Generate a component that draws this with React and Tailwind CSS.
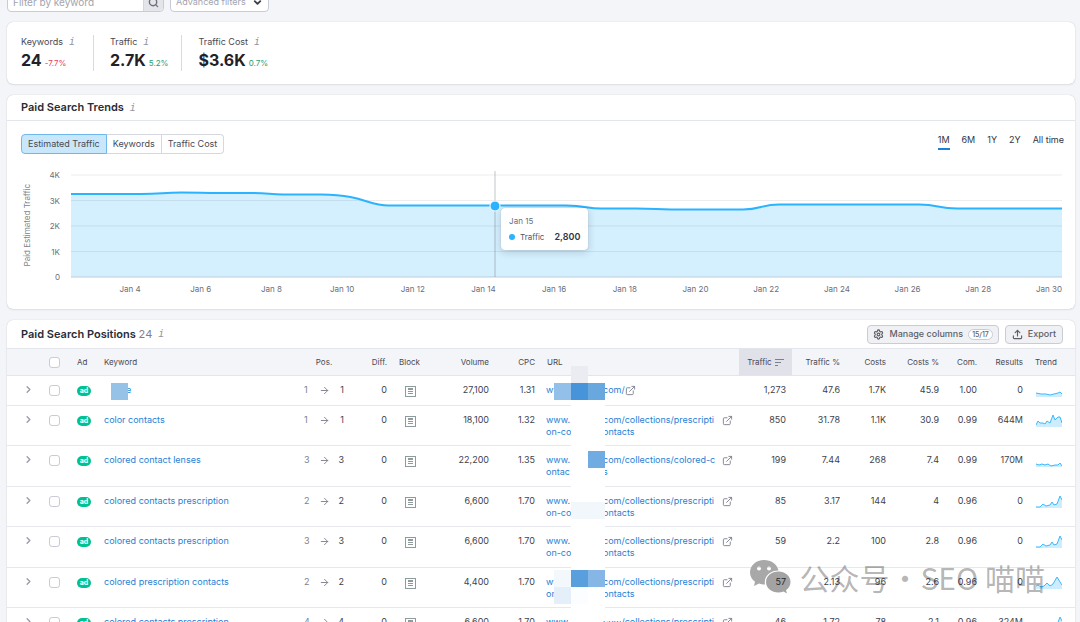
import React from 'react';
import { ArrowRight, ChevronDown, ChevronRight, ExternalLink, Search, Settings, Upload } from 'lucide-react';
import clsx from 'clsx';

const STATS = [
  { label: 'Keywords', value: '24', delta: '-7.7%', down: true },
  { label: 'Traffic', value: '2.7K', delta: '5.2%' },
  { label: 'Traffic Cost', value: '$3.6K', delta: '0.7%' },
];

const METRICS = ['Estimated Traffic', 'Keywords', 'Traffic Cost'];
const RANGES = ['1M', '6M', '1Y', '2Y', 'All time'];
const Y_TICKS = ['4K', '3K', '2K', '1K', '0'];
const X_TICKS = [4, 6, 8, 10, 12, 14, 16, 18, 20, 22, 24, 26, 28, 30];

const TREND_LINE =
  'M0 19H70C90 19 92 17.5 110 17.5C130 17.5 130 18 150 18H182C198 18 198 19.5 212 19.5H250C295 20 295 30.5 318 30.5H495C515 30.5 515 33.5 530 33.5H565C585 33.5 585 34.5 600 34.5H672C690 34.5 690 29.5 708 29.5H848C868 29.5 866 33.5 886 33.5H991';

const SPARK_RISE = '0,12 4,12 7,9 10,11 14,10 16,7 18,10 21,9 24,1 26,5';

const ROWS = [
  { keyword: 'e', masked: true, from: 1, to: 1, volume: '27,100', cpc: '1.31', url: [['www.', 'com/']], short: true, traffic: '1,273', trafficPct: '47.6', costs: '1.7K', costsPct: '45.9', com: '1.00', results: '0', spark: '0,9 5,10 10,10 14,11 18,10 22,9 24,8 26,10' },
  { keyword: 'color contacts', from: 1, to: 1, volume: '18,100', cpc: '1.32', url: [['www.', 'com/collections/prescripti'], ['on-co', 'ontacts']], traffic: '850', trafficPct: '31.78', costs: '1.1K', costsPct: '30.9', com: '0.99', results: '644M', spark: '0,11 2,7 4,9 7,9 9,10 11,7 14,9 17,1 19,6 22,3 24,3 26,9' },
  { keyword: 'colored contact lenses', from: 3, to: 3, volume: '22,200', cpc: '1.35', url: [['www.', 'com/collections/colored-c'], ['ontac', 's']], traffic: '199', trafficPct: '7.44', costs: '268', costsPct: '7.4', com: '0.99', results: '170M', spark: '0,10 3,11 6,10 9,11 12,10 15,12 19,11 22,11 24,9 26,12' },
  { keyword: 'colored contacts prescription', from: 2, to: 2, volume: '6,600', cpc: '1.70', url: [['www.', 'com/collections/prescripti'], ['on-co', 'ontacts']], traffic: '85', trafficPct: '3.17', costs: '144', costsPct: '4', com: '0.96', results: '0', spark: SPARK_RISE },
  { keyword: 'colored contacts prescription', from: 3, to: 3, volume: '6,600', cpc: '1.70', url: [['www.', 'com/collections/prescripti'], ['on-co', 'ontacts']], traffic: '59', trafficPct: '2.2', costs: '100', costsPct: '2.8', com: '0.96', results: '0', spark: SPARK_RISE },
  { keyword: 'colored prescription contacts', from: 2, to: 2, volume: '4,400', cpc: '1.70', url: [['www.', 'com/collections/prescripti'], ['on-co', 'ontacts']], traffic: '57', trafficPct: '2.13', costs: '96', costsPct: '2.6', com: '0.96', results: '0', spark: '0,10 2,9 5,11 8,10 11,7 14,10 17,8 21,1 24,6 26,9' },
  { keyword: 'colored contacts prescription', from: 4, to: 4, volume: '6,600', cpc: '1.70', url: [['www.', 'com/collections/prescripti'], ['on-co', 'ontacts']], traffic: '46', trafficPct: '1.72', costs: '78', costsPct: '2.1', com: '0.96', results: '324M', spark: SPARK_RISE },
];

const InfoMark = () => (
  <span aria-hidden="true" className="font-['DejaVu_Sans_Mono',monospace] text-[10px] leading-3 text-[#9294a0] italic">i</span>
);

const Card = ({ className, children, label }) => (
  <section aria-label={label} className={clsx('rounded-md bg-white shadow-[0_0_1px_rgba(25,27,35,0.25),0_1px_2px_rgba(25,27,35,0.08)]', className)}>
    {children}
  </section>
);

const FilterBar = () => (
  <div className="-mt-2 flex gap-[6px]">
    <div className="flex h-5 w-[157px] overflow-hidden rounded border border-[#c9ccd6] bg-white">
      <input
        type="text"
        aria-label="Filter by keyword"
        placeholder="Filter by keyword"
        className="min-w-0 flex-1 px-[5px] text-[10px] outline-none placeholder:text-[#a2a4ae]"
      />
      <button type="button" aria-label="Search" className="flex w-5 items-center justify-center border-l border-[#d4d6de] bg-[#e4e5eb] text-[#6c6e79]">
        <Search size={11} strokeWidth={3} />
      </button>
    </div>
    <button type="button" className="flex h-5 items-center gap-[6px] rounded border border-[#c9ccd6] bg-white px-[5px] text-[9px] text-[#a2a4ae]">
      Advanced filters
      <ChevronDown size={11} strokeWidth={4} className="text-[#3c3e48]" />
    </button>
  </div>
);

const StatsCard = () => (
  <Card label="Summary" className="mt-[10px] flex px-[14px] py-[13px]">
    {STATS.map((s, i) => (
      <div key={s.label} className={clsx('h-9', i > 0 && 'ml-[13px] border-l border-[#d8dae2] pl-4', i === 0 && 'pr-[5px]')}>
        <p className="flex items-center gap-[6px] pt-px text-[9px] leading-3 text-[#484a54]">
          {s.label}
          <InfoMark />
        </p>
        <p className="mt-[2px] flex items-baseline gap-[3px] leading-5">
          <span className="text-[16px] font-bold text-[#1f212b]">{s.value}</span>
          <span className={clsx('text-[8px]', s.down ? 'text-[#e8405f]' : 'text-[#1f9e73]')}>{s.delta}</span>
        </p>
      </div>
    ))}
  </Card>
);

const TrendChart = () => (
  <div className="flex pt-[21px] pr-[13px] pb-[14px] pl-[14px]">
    <div className="flex w-3 items-center justify-center pb-5">
      <span className="rotate-180 text-[8px] leading-3 whitespace-nowrap text-[#7d7f89] [writing-mode:vertical-rl]">Paid Estimated Traffic</span>
    </div>
    <div className="-my-[5px] flex w-[27px] flex-col justify-between pb-[18px] text-right text-[8px] leading-[10px] text-[#6c6e79]">
      {Y_TICKS.map((t) => (
        <span key={t}>{t}</span>
      ))}
    </div>
    <div className="ml-[11px] min-w-0 flex-1">
      <div className="relative h-[102px]">
        <svg viewBox="0 0 991 102" preserveAspectRatio="none" className="block h-full w-full overflow-visible">
          <path d={`${TREND_LINE}V102H0Z`} fill="#d4effe" />
          {[0, 25.5, 51, 76.5].map((y) => (
            <path key={y} d={`M0 ${y}H991`} stroke="#191b23" strokeOpacity="0.08" vectorEffect="non-scaling-stroke" />
          ))}
          <path d="M0 102H991" stroke="#bccddb" vectorEffect="non-scaling-stroke" />
          <path d={TREND_LINE} fill="none" stroke="#2bb3ff" strokeWidth="2" vectorEffect="non-scaling-stroke" />
        </svg>
        {/* hovered day */}
        <span className="absolute -top-1 bottom-0 left-[42.8%] w-px -translate-x-1/2 bg-[#6c6e79]/40" />
        <span className="absolute top-[30%] left-[42.8%] size-[11px] -translate-x-1/2 -translate-y-1/2 rounded-full border border-white bg-[#2bb3ff]" />
        <div className="absolute top-[33px] left-[43.4%] rounded bg-white px-2 py-[7px] text-[9px] shadow-[0_0_1px_rgba(25,27,35,0.3),0_2px_8px_rgba(25,27,35,0.18)]">
          <p className="text-[8px] leading-3 text-[#6c6e79]">Jan 15</p>
          <p className="mt-1 flex items-center leading-3 text-[#55575f]">
            <span className="mr-[5px] size-[6px] rounded-full bg-[#2bb3ff]" />
            <span className="text-[8px]">Traffic</span>
            <span className="ml-[10px] font-semibold text-[#33353e]">2,800</span>
          </p>
        </div>
      </div>
      <div className="mt-[6px] flex justify-between pl-[46px] text-[8px] leading-3 text-[#6c6e79]">
        {X_TICKS.map((d) => (
          <span key={d} className="w-[26px] text-center whitespace-nowrap">Jan {d}</span>
        ))}
      </div>
    </div>
  </div>
);

const TrendsCard = () => (
  <Card label="Paid Search Trends" className="mt-[11px]">
    <div className="flex h-[26px] items-center gap-[6px] border-b border-[#e3e5ec] pl-[14px]">
      <h2 className="text-[11px] font-semibold text-[#2a2c36]">Paid Search Trends</h2>
      <InfoMark />
    </div>
    <div className="flex items-start justify-between pt-[13px] pr-[11px] pl-[14px]">
      <div className="flex h-5 text-[9px] text-[#484a54]">
        {METRICS.map((m, i) => (
          <button
            key={m}
            type="button"
            className={clsx(
              'border px-[6px] first:rounded-l last:rounded-r',
              i === 0 ? 'border-[#6fb8ee] bg-[#c9e7fb]' : 'border-l-0 border-[#d6d8e0] bg-white',
            )}
          >
            {m}
          </button>
        ))}
      </div>
      <div className="flex gap-3 text-[9px] text-[#33353e]">
        {RANGES.map((r, i) => (
          <button key={r} type="button" className={clsx('h-4 border-b-2 pb-1 leading-3', i === 0 ? 'border-[#1f7fd6]' : 'border-transparent')}>
            {r}
          </button>
        ))}
      </div>
    </div>
    <TrendChart />
  </Card>
);

const BlockIcon = () => (
  <svg width="11" height="11" viewBox="0 0 11 11" className="ml-[6px]" fill="none" stroke="#8f9a9d">
    <rect x="0.5" y="0.5" width="10" height="10" />
    <path d="M3 2.5H8M3 3.5H8M3 5.5H8M3 7.5H8" />
  </svg>
);

const Sparkline = ({ points }) => (
  <svg width="26" height="13" viewBox="0 0 26 13" className="block">
    <polygon points={`0,13 ${points} 26,13`} fill="#cdecfe" />
    <polyline points={points} fill="none" stroke="#3bb8ff" />
  </svg>
);

// Right-aligned number cell
const Num = ({ children }) => <td className="px-[6px] pt-2 text-right">{children}</td>;

const Check = ({ label }) => (
  <input type="checkbox" aria-label={label} className="block size-[11px] appearance-none rounded-[3px] border border-[#c9ccd6] bg-white" />
);

const Row = ({ row }) => (
  <tr className={clsx('border-b border-[#e6e8ee] align-top', row.short ? 'h-[30px]' : 'odd:h-[41px] even:h-10')}>
    <td className="pt-2 pl-4">
      <button type="button" aria-label="Expand row" className="block text-[#9a9dA8]">
        <ChevronRight size={11} strokeWidth={3} />
      </button>
    </td>
    <td className="px-[6px] pt-[9px]">
      <Check label={`Select ${row.keyword}`} />
    </td>
    <td className="px-[6px] pt-[10px]">
      <span className="block h-[10px] w-[14px] rounded-[5px] bg-[#00c192] text-center text-[7px] leading-[9px] font-bold text-white">ad</span>
    </td>
    <td className="relative px-[6px] pt-2">
      <a href="#keyword" className={clsx('text-[#1f7fd6]', row.masked && 'pl-[22px]')}>{row.keyword}</a>
      {row.masked && <span className="absolute top-[7px] left-[13px] size-[17px] bg-[#97c2e8]" />}
    </td>
    <td className="px-1 pt-2">
      <div className="flex items-center justify-between">
        <span className="text-[#7d7f89]">{row.from}</span>
        <ArrowRight size={11} className="text-[#7d808d]" />
        <span>{row.to}</span>
      </div>
    </td>
    <Num>0</Num>
    <td className="px-[6px] pt-[10px]">
      <BlockIcon />
    </td>
    <Num>{row.volume}</Num>
    <Num>{row.cpc}</Num>
    <td className="pt-2 pr-[6px] pl-[5px]">
      <div className={clsx('flex items-start', !row.short && 'justify-between')}>
        <a href="#landing" className="text-[#1f7fd6]">
          {row.url.map(([head, tail]) => (
            <span key={head} className="flex whitespace-nowrap">
              <span className="w-[57px]">{head}</span>
              {tail}
            </span>
          ))}
        </a>
        <ExternalLink size={11} className="mt-px shrink-0 text-[#7d808d]" />
      </div>
    </td>
    <Num>{row.traffic}</Num>
    <Num>{row.trafficPct}</Num>
    <Num>{row.costs}</Num>
    <Num>{row.costsPct}</Num>
    <Num>{row.com}</Num>
    <Num>{row.results}</Num>
    <td className="pt-2 pl-[7px]">
      <Sparkline points={row.spark} />
    </td>
  </tr>
);

// Pixelation laid over the domain part of the URL column
const DomainMask = () => (
  <div aria-hidden="true" className="pointer-events-none absolute top-[18px] right-[453px] grid auto-rows-[17px] grid-cols-[17px_17px_17px_17px]">
    <span className="col-start-2 row-start-1 bg-[#ebecf1]" />
    <span className="col-start-1 row-start-2 bg-[#93c0e8]" />
    <span className="col-start-2 row-start-2 bg-[#4794da]" />
    <span className="col-start-3 row-start-2 bg-[#68a8df]" />
    <span className="col-span-2 col-start-2 row-span-13 row-start-3 bg-white" />
    <span className="col-start-3 row-start-6 bg-[#70abe1]" />
    <span className="col-span-2 col-start-2 row-start-9 bg-[#f2f7fc]" />
    <span className="col-start-1 row-start-13 bg-[#f3f8fc]" />
    <span className="col-start-2 row-start-13 bg-[#599edd]" />
    <span className="col-start-3 row-start-13 bg-[#85b6e6]" />
    <span className="col-start-1 row-start-14 bg-[#e4eff9]" />
    <span className="col-start-2 row-start-14 bg-[#fbfdff]" />
    <span className="col-span-3 col-start-2 row-start-15 mt-1 bg-white" />
  </div>
);

const PositionsCard = () => (
  <Card label="Paid Search Positions" className="mt-[11px]">
    <div className="flex h-7 items-center justify-between pr-3 pl-[14px]">
      <div className="flex items-center gap-[6px]">
        <h2 className="text-[11px] font-semibold text-[#2a2c36]">
          Paid Search Positions <span className="font-normal text-[#7d7f89]">24</span>
        </h2>
        <InfoMark />
      </div>
      <div className="flex gap-[6px] text-[9px] font-medium text-[#5d5f69]">
        <button type="button" className="flex h-[19px] items-center gap-[5px] rounded border border-[#c9ccd6] bg-[#f0f1f4] px-[5px]">
          <Settings size={11} strokeWidth={2.5} />
          Manage columns
          <span className="rounded-full border border-[#c9ccd6] bg-white px-[3px] text-[7px] leading-[9px]">15/17</span>
        </button>
        <button type="button" className="flex h-[19px] items-center gap-[5px] rounded border border-[#c9ccd6] bg-[#f0f1f4] px-[6px]">
          <Upload size={11} strokeWidth={2.5} />
          Export
        </button>
      </div>
    </div>
    <div className="relative">
      <table className="w-full table-fixed border-collapse text-[9px] leading-3 text-[#40424c]">
        <colgroup>
          <col className="w-9" />
          <col className="w-7" />
          <col className="w-[27px]" />
          <col />
          <col className="w-12" />
          <col className="w-[45px]" />
          <col className="w-[37px]" />
          <col className="w-[65px]" />
          <col className="w-[46px]" />
          <col className="w-[198px]" />
          <col className="w-[53px]" />
          <col className="w-[54px]" />
          <col className="w-[46px]" />
          <col className="w-[53px]" />
          <col className="w-[38px]" />
          <col className="w-[46px]" />
          <col className="w-[46px]" />
        </colgroup>
        <thead>
          <tr className="h-[27px] border-y border-[#e3e5ec] bg-[#f4f5f9] text-[8px] text-[#484a54] [&>th]:px-[6px] [&>th]:font-normal [&>th]:whitespace-nowrap">
            <th />
            <th><Check label="Select all" /></th>
            <th className="text-left">Ad</th>
            <th className="text-left">Keyword</th>
            <th>Pos.</th>
            <th className="text-right">Diff.</th>
            <th className="text-left">Block</th>
            <th className="text-right">Volume</th>
            <th className="text-right">CPC</th>
            <th className="text-left">URL</th>
            <th className="bg-[#e0e1e9]" aria-sort="descending">
              <span className="flex items-center justify-center gap-[3px]">
                Traffic
                <svg width="9" height="8" viewBox="0 0 9 8" stroke="#7d7f89" fill="none">
                  <path d="M0 1.5H9M0 4.5H6M0 7.5H3" />
                </svg>
              </span>
            </th>
            <th className="text-right">Traffic %</th>
            <th className="text-right">Costs</th>
            <th className="text-right">Costs %</th>
            <th className="text-right">Com.</th>
            <th className="text-right">Results</th>
            <th className="text-left">Trend</th>
          </tr>
        </thead>
        <tbody>
          {ROWS.map((row, i) => (
            <Row key={i} row={row} />
          ))}
        </tbody>
      </table>
      <DomainMask />
    </div>
  </Card>
);

const Watermark = () => (
  <div className="pointer-events-none absolute right-[35px] bottom-[23px] flex items-center font-['Noto_Sans_CJK_SC',sans-serif] text-[30px] leading-[44px] font-normal text-black/30">
    <svg width="42" height="36" viewBox="0 0 42 36" className="mr-2">
      <path
        fill="#a8a8a8"
        fillRule="evenodd"
        d="M15 1C7 1 1 6.500 1 13.500C1 17.500 3 20.500 6 22.800L5 27L10 24.600Q13 25.600 16 25.500C14.500 17.500 21 11.500 29.500 11.500C28 5 22 1 15 1ZM10 7.500A2 2 0 1 1 10 11.500A2 2 0 1 1 10 7.500ZM20 7.500A2 2 0 1 1 20 11.500A2 2 0 1 1 20 7.500Z"
      />
      <path
        fill="#000"
        fillOpacity="0.36"
        fillRule="evenodd"
        d="M29.500 12.500C22.500 12.500 17 17 17 23C17 29 22.500 33.500 29.500 33.500Q32 33.500 34.500 32.600L38 34.500L37 31.200C40 29 41.500 26 41.500 23C41.500 17 36 12.500 29.500 12.500Z"
      />
    </svg>
    <span>公众号</span>
    <span className="w-[31px] text-center">·</span>
    <span>SEO 喵喵</span>
  </div>
);

export default function App() {
  return (
    <main className="relative h-screen overflow-hidden bg-[#f4f5f9] pr-[5px] pl-[7px] font-[Inter,sans-serif]">
      <FilterBar />
      <StatsCard />
      <TrendsCard />
      <PositionsCard />
      <Watermark />
    </main>
  );
}
